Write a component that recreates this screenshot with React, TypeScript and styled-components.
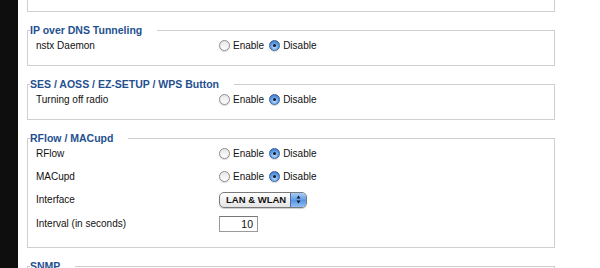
import styled, { createGlobalStyle } from 'styled-components';

const GlobalStyle = createGlobalStyle`
    html, body {
        margin: 0;
        padding: 0;
        background: #fff;
    }
    body {
        font-family: 'Liberation Sans', Arial, sans-serif;
        font-size: 10px;
        color: #111;
    }
`;

const Page = styled.div`
    display: flex;
    width: 600px;
    height: 268px;
    overflow: hidden;
`;

const SideStrip = styled.div`
    width: 18px;
    flex-shrink: 0;
    background: #0e0e0e;
`;

const Main = styled.div`
    flex: 1;
    padding: 0 45px 0 9px;
    display: flex;
    flex-direction: column;
    gap: 12px;

    & > * {
        flex-shrink: 0;
    }
`;

// 위쪽 섹션 (스크롤로 잘린 부분)
const CutBox = styled.div`
    height: 11px;
    border: 1px solid #cfcfcf;
    border-top: none;
`;

const Fieldset = styled.fieldset<{ $bottom?: number }>`
    margin: 0;
    padding: 0 0 ${({ $bottom }) => $bottom ?? 11}px 8px;
    border: 1px solid #cfcfcf;
    min-width: 0;
`;

const Legend = styled.legend`
    margin-left: -6px;
    padding: 0 15px 0 0;
    background: #fff;
    color: #24508f;
    font-weight: bold;
    font-size: 10.5px;
    line-height: 12px;
`;

const Row = styled.div<{ $tall?: boolean }>`
    display: flex;
    align-items: center;
    height: ${({ $tall }) => ($tall ? '19px' : '18px')};
    & + & {
        margin-top: 5px;
    }
`;

const Label = styled.div`
    width: 183px;
    flex-shrink: 0;
`;

const Options = styled.div`
    display: flex;
    align-items: center;
`;

const RadioLabel = styled.label`
    display: flex;
    align-items: center;
    gap: 3px;
    margin-right: 5px;
`;

const RadioDot = styled.span<{ $checked?: boolean }>`
    position: relative;
    display: inline-block;
    width: 11px;
    height: 11px;
    border-radius: 50%;
    box-sizing: border-box;
    border: 1px solid ${({ $checked }) => ($checked ? '#3a5f9a' : '#8c8c8c')};
    background: ${({ $checked }) =>
        $checked
            ? 'radial-gradient(circle at 50% 70%, #b8dcff 0%, #6aa6e8 45%, #2d68c4 100%)'
            : 'linear-gradient(#e6e6e6, #ffffff)'};
    box-shadow: 0 1px 1px rgba(0, 0, 0, 0.15);

    &::after {
        content: '';
        display: ${({ $checked }) => ($checked ? 'block' : 'none')};
        position: absolute;
        left: 3px;
        top: 3px;
        width: 3px;
        height: 3px;
        border-radius: 50%;
        background: #10182a;
    }
`;

const Select = styled.div`
    display: flex;
    align-items: stretch;
    width: 88px;
    height: 16px;
    box-sizing: border-box;
    border: 1px solid #7a7a7a;
    border-radius: 5px;
    overflow: hidden;
    background: linear-gradient(#ffffff, #e4e4e4);
    box-shadow: 0 1px 1px rgba(0, 0, 0, 0.2);
`;

const SelectText = styled.span`
    flex: 1;
    display: flex;
    align-items: center;
    padding-left: 6px;
    white-space: nowrap;
    font-weight: bold;
    font-size: 9.5px;
    color: #111;
`;

const SelectArrows = styled.span`
    width: 15px;
    flex-shrink: 0;
    display: flex;
    align-items: center;
    justify-content: center;
    border-left: 1px solid #4b6fa8;
    background: linear-gradient(#a9cdf6, #5b96e0 55%, #8fc0f5);
`;

const NumberInput = styled.div`
    width: 39px;
    height: 16px;
    box-sizing: border-box;
    border: 1px solid #9a9a9a;
    border-top-color: #777;
    padding-right: 4px;
    display: flex;
    align-items: center;
    justify-content: flex-end;
    font-size: 10.5px;
    color: #111;
`;

const Radio = ({ checked, text }: { checked?: boolean; text: string }) => (
    <RadioLabel>
        <RadioDot $checked={checked} />
        {text}
    </RadioLabel>
);

const EnableDisable = () => (
    <Options>
        <Radio text="Enable" />
        <Radio checked text="Disable" />
    </Options>
);

const App = () => {
    return (
        <>
            <GlobalStyle />
            <Page>
                <SideStrip />
                <Main>
                    <CutBox />

                    <Fieldset>
                        <Legend>IP over DNS Tunneling</Legend>
                        <Row>
                            <Label>nstx Daemon</Label>
                            <EnableDisable />
                        </Row>
                    </Fieldset>

                    <Fieldset>
                        <Legend>SES / AOSS / EZ-SETUP / WPS Button</Legend>
                        <Row>
                            <Label>Turning off radio</Label>
                            <EnableDisable />
                        </Row>
                    </Fieldset>

                    <Fieldset $bottom={14}>
                        <Legend>RFlow / MACupd</Legend>
                        <Row>
                            <Label>RFlow</Label>
                            <EnableDisable />
                        </Row>
                        <Row>
                            <Label>MACupd</Label>
                            <EnableDisable />
                        </Row>
                        <Row $tall>
                            <Label>Interface</Label>
                            <Select>
                                <SelectText>LAN &amp; WLAN</SelectText>
                                <SelectArrows>
                                    <svg width="5" height="9" viewBox="0 0 5 9">
                                        <path d="M2.5 0.5 L4.5 3.5 L0.5 3.5 Z" fill="#0c1a33" />
                                        <path d="M2.5 8.5 L4.5 5.5 L0.5 5.5 Z" fill="#0c1a33" />
                                    </svg>
                                </SelectArrows>
                            </Select>
                        </Row>
                        <Row $tall>
                            <Label>Interval (in seconds)</Label>
                            <NumberInput>10</NumberInput>
                        </Row>
                    </Fieldset>

                    <Fieldset>
                        <Legend>SNMP</Legend>
                        <Row>
                            <Label>SNMP</Label>
                            <EnableDisable />
                        </Row>
                    </Fieldset>
                </Main>
            </Page>
        </>
    );
};

export default App;
